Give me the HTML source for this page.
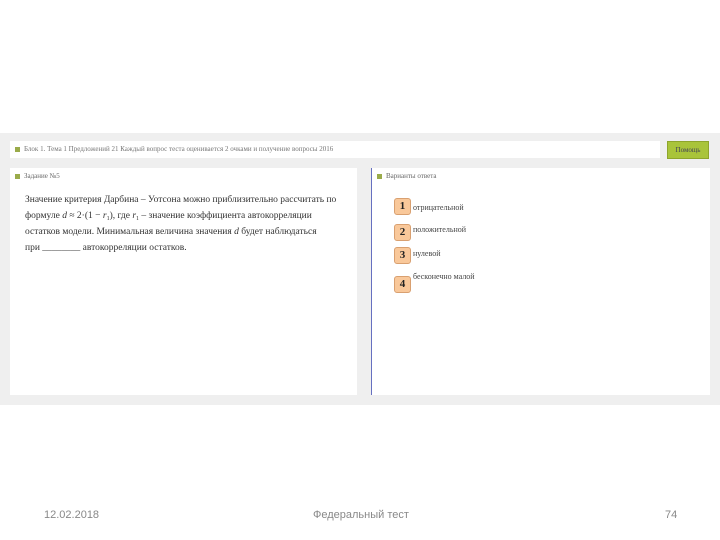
<!DOCTYPE html>
<html><head><meta charset="utf-8"><style>
body{margin:0;width:720px;height:540px;background:#fff;position:relative;font-family:"Liberation Serif",serif;overflow:hidden}
.abs{position:absolute}
.gray{left:0;top:133px;width:720px;height:272px;background:#efefef}
.bar{left:10px;top:141px;width:650px;height:17px;background:#fff;font-size:7px;color:#777;line-height:17px;white-space:nowrap;overflow:hidden}
.sq{display:inline-block;width:5px;height:5px;background:#9aab4a;margin:0 4px 0 5px;vertical-align:middle}
.btn{left:667px;top:141px;width:42px;height:18px;background:#a9c43a;border:1px solid #8ea52c;box-sizing:border-box;font-size:7px;color:#445;text-align:center;line-height:16px}
.panel{background:#fff;top:168px;height:227px}
.txt{font-size:9.5px;color:#333;line-height:16px;white-space:nowrap}
.txt sub{font-size:6px;vertical-align:0;position:relative;top:2px;line-height:0}
.num{width:15px;height:15px;background:#f9c89a;border:1px solid #d9a070;border-radius:3px;font-weight:bold;font-size:11px;text-align:center;line-height:15px;color:#222}
.ans{font-size:8px;color:#444}
.foot{top:509px;font-family:"Liberation Sans",sans-serif;font-size:11px;color:#888}
</style></head><body>
<div class="abs gray"></div>
<div class="abs bar"><span class="sq"></span>Блок 1. Тема 1 Предложений 21 Каждый вопрос теста оценивается 2 очками и получение вопросы 2016</div>
<div class="abs btn">Помощь</div>
<div class="abs panel" style="left:10px;width:347px">
 <div class="abs" style="left:0;top:4px;font-size:7px;color:#666"><span class="sq"></span>Задание №5</div>
 <div class="abs txt" style="left:15px;top:24px">Значение критерия Дарбина – Уотсона можно приблизительно рассчитать по<br>формуле <i>d</i> ≈ 2·(1 − <i>r</i><sub>1</sub>), где <i>r</i><sub>1</sub> – значение коэффициента автокорреляции<br>остатков модели. Минимальная величина значения <i>d</i> будет наблюдаться<br>при ________ автокорреляции остатков.</div>
</div>
<div class="abs" style="left:371px;top:168px;width:1px;height:227px;background:#6670c0"></div>
<div class="abs panel" style="left:372px;width:338px">
 <div class="abs" style="left:0;top:4px;font-size:7px;color:#666"><span class="sq"></span>Варианты ответа</div>
 <div class="abs num" style="left:22px;top:30px">1</div><div class="abs ans" style="left:41px;top:35px">отрицательной</div>
 <div class="abs num" style="left:22px;top:56px">2</div><div class="abs ans" style="left:41px;top:57px">положительной</div>
 <div class="abs num" style="left:22px;top:79px">3</div><div class="abs ans" style="left:41px;top:81px">нулевой</div>
 <div class="abs num" style="left:22px;top:108px">4</div><div class="abs ans" style="left:41px;top:104px">бесконечно малой</div>
</div>
<div class="abs foot" style="left:44px">12.02.2018</div>
<div class="abs foot" style="left:313px">Федеральный тест</div>
<div class="abs foot" style="left:665px">74</div>
</body></html>
